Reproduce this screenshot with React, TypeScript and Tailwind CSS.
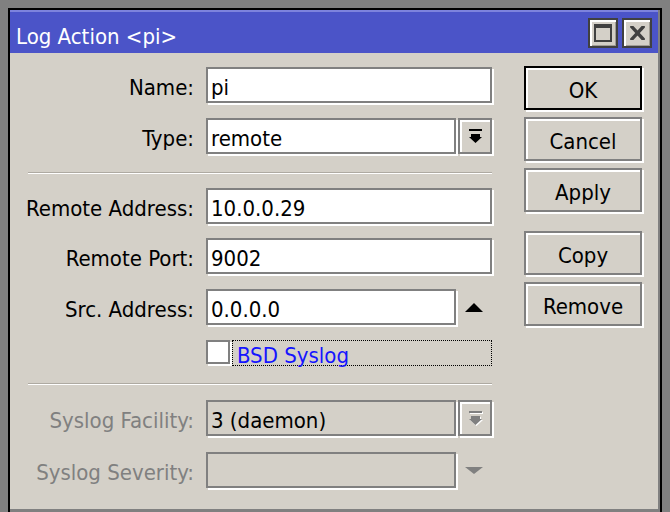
const labelCls = 'flex w-[166px] shrink-0 justify-end whitespace-nowrap pt-[5px]';

function DropArrow({ disabled }: { disabled?: boolean }) {
  return (
    <svg width="13" height="14" viewBox="0 0 13 14" className={disabled ? 'drop-shadow-[1px_1px_0_#ffffff]' : ''}>
      <g fill={disabled ? '#808080' : '#000000'}>
        <rect x="0" y="0" width="13" height="2" />
        <polygon points="2,5 11,5 11,8 13,8 6.5,14 0,8 2,8" />
      </g>
    </svg>
  );
}

function Row({ label, children, disabled }: { label: string; children: React.ReactNode; disabled?: boolean }) {
  return (
    <div className="flex h-9 items-center gap-3">
      <div className={disabled ? `${labelCls} text-[#808080]` : `${labelCls} text-black`}>{label}</div>
      {children}
    </div>
  );
}

function Separator() {
  return <div className="h-[2px] w-[464px] border-t border-b border-t-[#aeaaa2] border-b-white" />;
}

function SideButton({ label, primary }: { label: string; primary?: boolean }) {
  return (
    <button
      className={
        primary
          ? 'flex h-[44px] w-[118px] items-center justify-center border-2 border-black bg-[#d4d0c8] pt-[6px] text-black shadow-[inset_2px_2px_0_#ffffff,2px_2px_0_#ffffff]'
          : 'flex h-[44px] w-[118px] items-center justify-center border-2 border-[#808080] bg-[#d4d0c8] pt-[6px] text-black shadow-[inset_2px_2px_0_#ffffff,2px_2px_0_#ffffff]'
      }
    >
      {label}
    </button>
  );
}

export default function App() {
  return (
    <div className="h-[512px] w-[670px] overflow-hidden bg-[#808080] pl-2 pt-2 font-['DejaVu_Sans_Condensed','DejaVu_Sans',sans-serif] text-[22px] leading-none">
      <div className="flex h-[504px] w-[654px] flex-col border-l-2 border-r-2 border-t-2 border-black">
        <div className="flex flex-1 flex-col border-b-[3px] border-r-2 border-[#808080]">
          {/* title bar */}
          <div className="flex h-[43px] items-center justify-between border-t-2 border-[#7d83dd] bg-[#4b54c8] pl-[6px] pr-[6px]">
            <span className="mt-[8px] text-white">Log Action &lt;pi&gt;</span>
            <div className="flex gap-1">
              <div className="flex h-[30px] w-[30px] items-center justify-center border-2 border-[#404040] bg-[#d4d0c8] shadow-[inset_2px_2px_0_#ffffff,inset_-1px_-1px_0_#a09c94]">
                <div className="h-[18px] w-[18px] border-2 border-t-4 border-[#404040]" />
              </div>
              <div className="flex h-[30px] w-[30px] items-center justify-center border-2 border-[#404040] bg-[#d4d0c8] shadow-[inset_2px_2px_0_#ffffff,inset_-1px_-1px_0_#a09c94]">
                <svg width="15" height="14" viewBox="0 0 15 14">
                  <path d="M2 1 L13 13 M13 1 L2 13" stroke="#404040" strokeWidth="3.4" strokeLinecap="square" />
                </svg>
              </div>
            </div>
          </div>

          {/* body */}
          <div className="flex flex-1 bg-[#d4d0c8] pl-[18px] pr-4">
            <div className="flex w-[464px] flex-col pt-[14px]">
              <Row label="Name:">
                <div className="flex h-9 w-[286px] items-center border-2 border-[#808080] bg-white pl-[3px] pt-[5px] shadow-[2px_2px_0_#ffffff]">pi</div>
              </Row>
              <div className="mt-[15px]">
                <Row label="Type:">
                  <div className="flex items-center gap-[2px]">
                    <div className="flex h-9 w-[250px] items-center border-2 border-[#808080] bg-white pl-[3px] pt-[5px] shadow-[2px_2px_0_#ffffff]">remote</div>
                    <div className="flex h-9 w-[34px] items-center justify-center border-2 border-[#808080] bg-[#d4d0c8] shadow-[inset_2px_2px_0_#ffffff,2px_2px_0_#ffffff]">
                      <DropArrow />
                    </div>
                  </div>
                </Row>
              </div>

              <div className="mt-[18px] mb-[14px]">
                <Separator />
              </div>

              <div className="flex flex-col gap-[14px]">
                <Row label="Remote Address:">
                  <div className="flex h-9 w-[286px] items-center border-2 border-[#808080] bg-white pl-[3px] pt-[5px] shadow-[2px_2px_0_#ffffff]">10.0.0.29</div>
                </Row>
                <Row label="Remote Port:">
                  <div className="flex h-9 w-[286px] items-center border-2 border-[#808080] bg-white pl-[3px] pt-[5px] shadow-[2px_2px_0_#ffffff]">9002</div>
                </Row>
              </div>
              <div className="mt-[15px]">
                <Row label="Src. Address:">
                  <div className="flex items-center">
                    <div className="flex h-9 w-[250px] items-center border-2 border-[#808080] bg-white pl-[3px] pt-[5px] shadow-[2px_2px_0_#ffffff]">0.0.0.0</div>
                    <div className="flex h-9 w-[36px] items-center justify-center">
                      <svg width="18" height="9" viewBox="0 0 18 9">
                        <polygon points="9,0 18,9 0,9" fill="#000000" />
                      </svg>
                    </div>
                  </div>
                </Row>
              </div>

              <div className="mt-[15px] flex h-[26px] items-start pl-[178px]">
                <div className="h-6 w-6 border-2 border-[#808080] bg-white shadow-[2px_2px_0_#ffffff]" />
                <div className="ml-[2px] flex h-[26px] w-[261px] items-center border border-dotted border-black pl-[4px] pt-[5px] text-[#1515ff]">
                  BSD Syslog
                </div>
              </div>

              <div className="mt-[17px] mb-[15px]">
                <Separator />
              </div>

              <Row label="Syslog Facility:" disabled>
                <div className="flex items-center gap-[2px]">
                  <div className="flex h-9 w-[250px] items-center border-2 border-[#808080] bg-[#d4d0c8] pl-[3px] pt-[5px] text-black shadow-[2px_2px_0_#ffffff]">3 (daemon)</div>
                  <div className="flex h-9 w-[34px] items-center justify-center border-2 border-[#808080] bg-[#d4d0c8] shadow-[inset_2px_2px_0_#ffffff,2px_2px_0_#ffffff]">
                    <DropArrow disabled />
                  </div>
                </div>
              </Row>
              <div className="mt-4">
                <Row label="Syslog Severity:" disabled>
                  <div className="flex items-center">
                    <div className="h-9 w-[250px] border-2 border-[#808080] bg-[#d4d0c8] shadow-[2px_2px_0_#ffffff]" />
                    <div className="flex h-9 w-[36px] items-center justify-center">
                      <svg width="18" height="7" viewBox="0 0 18 7">
                        <polygon points="0,0 18,0 9,7" fill="#808080" />
                      </svg>
                    </div>
                  </div>
                </Row>
              </div>
            </div>

            {/* buttons */}
            <div className="ml-8 flex w-[118px] flex-col pt-[13px]">
              <div className="flex flex-col gap-[7px]">
                <SideButton label="OK" primary />
                <SideButton label="Cancel" />
                <SideButton label="Apply" />
              </div>
              <div className="mt-[19px] flex flex-col gap-[7px]">
                <SideButton label="Copy" />
                <SideButton label="Remove" />
              </div>
            </div>
          </div>
        </div>
      </div>
    </div>
  );
}
